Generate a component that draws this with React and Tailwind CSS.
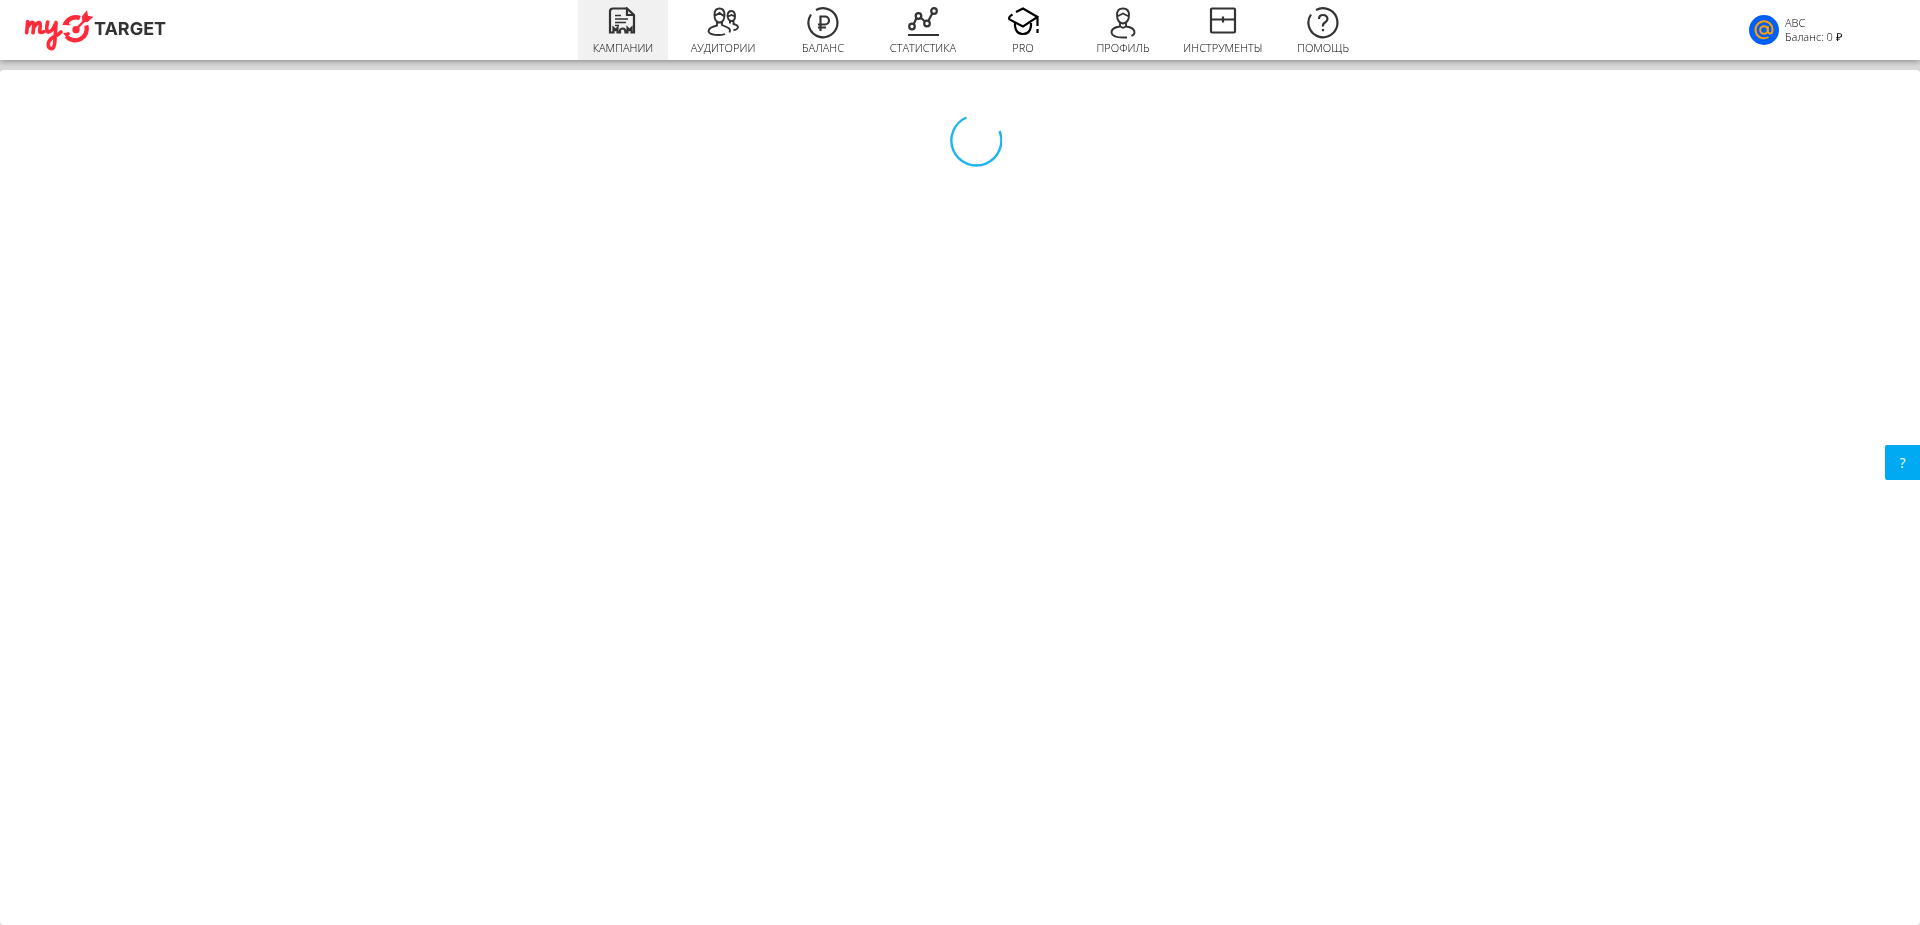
import React from "react";

const icons = {
  campaigns: (
    <g>
      <path d="M19 1.500H6Q3 1.500 3 4.500V25.500H6.500V21L8.500 23L10.500 21V25.500H13Q12.500 21.500 15.500 21.500T18.500 25.500H20.500V21L22.500 23L24.500 21V25.500H27V8L20 1.500V8H27" />
      <path d="M8 8.500h6M8 12h13M8 15.500h11M8 18.500h4" strokeWidth="1.600" />
    </g>
  ),
  audiences: (
    <g strokeWidth="1.900">
      <path d="M7.500 8Q7.500 1.500 12.500 1.500T17.500 8Q17.500 15 12.500 15.500Q7.500 15 7.500 8M7.500 9L12.500 6L17.500 9.500M10 15V18.500C5 19.500 1.500 21.500 1.500 24.500Q2.500 28 12 28Q16 28 18 27M15 15V18L20.500 20.500Q24 22 22.500 25.500" />
      <path d="M20.500 8.500Q21 4 24.500 4T28 9.500Q28 14 24.500 14Q21 14 20.500 8.500M21 9.500L24.500 8L28 9.500M23 14V16.500M26.500 14V17Q31 18 31 20.500Q30 23 26.500 23" />
    </g>
  ),
  balance: (
    <g>
      <path d="M9 3A14.500 14.500 0 1 1 4 7.500" />
      <path d="M13.500 24V9.500h4.500a4 4 0 0 1 0 8H11M11 20.500h8" strokeWidth="2.200" />
    </g>
  ),
  stats: (
    <g>
      <path d="M1 28h31M6.500 17.500L9.500 11M13 10L18 14.500M21 14.500L25.500 6" />
      <circle cx="5" cy="19.500" r="2.800" />
      <circle cx="11.500" cy="9" r="2.800" />
      <circle cx="20" cy="16.500" r="2.800" />
      <circle cx="27" cy="4" r="2.800" />
    </g>
  ),
  pro: (
    <g strokeWidth="2.200">
      <path d="M9 5L16 1.500L30.500 10L16 19.500L2.500 12.500Q1 10 5.500 7.500M30.500 10V19M30.500 22V26M8 16V19Q9 27 16 27T24 19V16" />
    </g>
  ),
  profile: (
    <g strokeWidth="1.900">
      <path d="M10 8Q10 1.500 16 1.500T22 8Q22 15.500 16 16.500Q10 15.500 10 8M10 9.500L14 7.500L16 6.500L18 7.500L22 9.500M13 16V19.500Q4.500 20.500 4.500 25.500Q5 30.500 16 30.500H20M19 16V19.500Q27.500 20.500 27.500 25.500Q27.500 27.500 24.500 29M13 19Q16 22.500 19 19" />
    </g>
  ),
  tools: (
    <g>
      <rect x="4" y="1.500" width="24" height="24" rx="1" />
      <path d="M4 12.500h24M16 9.500v6" />
    </g>
  ),
  help: (
    <g>
      <path d="M9 3A14.500 14.500 0 1 1 4 7.500" />
      <path d="M12 12Q12 8 16 8T20.500 12Q20.500 14 18 15.500T16 19.500M16 22v2.200" strokeWidth="2.200" />
    </g>
  ),
};

const items = [
  ["campaigns", "КАМПАНИИ"],
  ["audiences", "АУДИТОРИИ"],
  ["balance", "БАЛАНС"],
  ["stats", "СТАТИСТИКА"],
  ["pro", "PRO"],
  ["profile", "ПРОФИЛЬ"],
  ["tools", "ИНСТРУМЕНТЫ"],
  ["help", "ПОМОЩЬ"],
];

function Logo() {
  return (
    <a href="#" className="flex items-start gap-px text-[#333]">
      <svg className="h-[42px] w-[67px] overflow-visible" viewBox="78 28 201 126" fill="none" stroke="#ff2a3a" strokeLinecap="round" strokeLinejoin="round" aria-hidden="true">
        <path strokeWidth="11" d="M83 66L80 99M82 84Q94 62 101 71Q102 76 99 99M101 84Q115 62 120 71Q122 75 119 92Q118 102 132 96" />
        <path strokeWidth="11" d="M143 67Q137 91 144 97Q156 99 168 69M168 69L165 118Q164 147 156 147Q144 148 145 133Q146 118 166 109Q176 104 183 97" />
        <path strokeWidth="13" strokeLinecap="butt" d="M196 73A35 35 0 0 1 240 55M259 77A35 35 0 0 1 199 110" />
        <path fill="#ff2a3a" stroke="none" d="M187 76L192 66L205 69L212 77ZM189 101L207 97L211 103L199 112Z" />
        <circle cx="228" cy="90" r="11" fill="#ff2a3a" stroke="none" />
        <path strokeWidth="7" d="M229 88L254 62" />
        <path fill="#ff2a3a" stroke="none" d="M246 50L261 32L264 48L280 51L263 67L247 66Z" />
      </svg>
      <span className="mt-2 font-[Inter,sans-serif] text-[18px] leading-6 font-bold">TARGET</span>
    </a>
  );
}

export default function App() {
  return (
    <div className="flex min-h-screen flex-col bg-[#d8d8d8] font-['Open_Sans',sans-serif] font-light text-[#333]">
      <header className="z-10 grid h-[60px] grid-cols-[1fr_auto_1fr] bg-white pl-[26px] shadow-[0_1px_6px_rgba(0,0,0,0.4)]">
        <div className="flex items-center"><Logo /></div>
        <nav className="flex gap-2.5 px-[5px]">
          {items.map(([id, label], i) => (
            <a
              key={id}
              href="#"
              aria-current={i === 0 ? "page" : undefined}
              className={"flex w-[90px] flex-col items-center pt-[7px] " + (i === 0 ? "bg-[#f1f1f1]" : "")}
            >
              <svg className={"h-8 w-8 shrink-0 " + (id === "pro" ? "text-black" : "")} viewBox="0 0 32 32" fill="none" stroke="currentColor" strokeWidth="2.200" aria-hidden="true">
                {icons[id]}
              </svg>
              <span className="mt-px text-[11px] leading-4 text-black">{label}</span>
            </a>
          ))}
        </nav>
        <div className="flex items-center justify-end">
          <a href="#" className="flex w-[171px] items-center gap-1.5">
            <svg className="h-[30px] w-[30px]" viewBox="0 0 30 30" fill="none" aria-hidden="true">
              <circle cx="15" cy="15" r="15" fill="#005ff9" />
              <g stroke="#ff9e00" strokeWidth="2">
                <circle cx="15" cy="15" r="3.800" />
                <path d="M18.800 11V16Q19 18.500 21 18.500Q23.500 18.500 23.500 15A8.500 8.500 0 1 0 19.500 22" />
              </g>
            </svg>
            <span className="text-[11px] leading-[14px] text-black">ABC<br />Баланс: 0 ₽</span>
          </a>
        </div>
      </header>
      <main className="mt-2.5 flex grow flex-col items-center rounded bg-white pt-[45px] pl-8">
        <svg role="status" aria-label="Загрузка" className="h-[52px] w-[52px]" viewBox="0 0 52 52" fill="none" stroke="#1eb4f2" strokeWidth="2.400">
          <path d="M16.500 2.500A25 25 0 1 0 49.500 16" />
        </svg>
      </main>
      <div className="fixed inset-y-0 right-0 flex items-center">
        <button type="button" aria-label="Помощь" className="h-[35px] w-[35px] rounded-l-xs bg-[#00aaf2] text-[14px] font-normal text-white">?</button>
      </div>
    </div>
  );
}
